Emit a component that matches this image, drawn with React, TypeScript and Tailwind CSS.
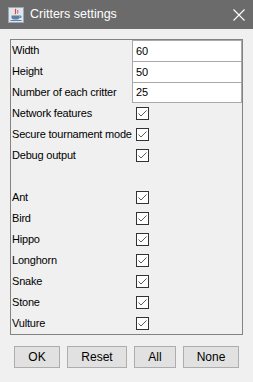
import React from "react";

const fields = [
  { label: "Width", value: "60" },
  { label: "Height", value: "50" },
  { label: "Number of each critter", value: "25" },
];

const options = ["Network features", "Secure tournament mode", "Debug output"];
const critters = ["Ant", "Bird", "Hippo", "Longhorn", "Snake", "Stone", "Vulture"];

function Check() {
  return (
    <div className="ml-[4px] w-[13px] h-[13px] border border-[#333333] bg-white flex items-center justify-center">
      <svg width="11" height="11" viewBox="0 0 11 11">
        <polyline points="1.5,5.5 4,8 9.5,2.5" fill="none" stroke="#5a5a5a" strokeWidth="1" />
      </svg>
    </div>
  );
}

function CheckRow({ label }: { label: string }) {
  return (
    <div className="grid grid-cols-[121px_110px] h-[21px] items-center">
      <span className="pl-[1px] whitespace-nowrap">{label}</span>
      <div className="flex items-center">
        <Check />
      </div>
    </div>
  );
}

export default function App() {
  return (
    <div
      className="w-[253px] h-[382px] bg-[#f0f0f0] flex flex-col text-[11px] tracking-[-0.2px] text-black"
      style={{ fontFamily: '"Liberation Sans", Arial, sans-serif' }}
    >
      {/* title bar */}
      <div className="h-[29px] bg-[#6b6b6b] flex items-center pl-[8px] shrink-0 tracking-normal">
        <svg width="16" height="16" viewBox="0 0 16 16">
          <rect x="0.5" y="0.5" width="15" height="15" fill="#dfe6ee" stroke="#9aa7b4" />
          <path d="M8 2 C6 4 9 5 7 7" stroke="#e2442f" strokeWidth="1.2" fill="none" />
          <path d="M10 3 C9 4.5 10.5 5 9.5 6.5" stroke="#e2442f" strokeWidth="1" fill="none" />
          <path d="M3.5 8.5 H11.5 V10.5 C11.5 12 10 12.5 7.5 12.5 C5 12.5 3.5 12 3.5 10.5 Z" fill="#5b7fa6" />
          <path d="M11.5 9 H13 V10.5 H11.5" stroke="#5b7fa6" fill="none" />
          <rect x="2.5" y="13" width="11" height="1" fill="#5b7fa6" />
        </svg>
        <span className="ml-[6px] text-white text-[12.5px]">Critters settings</span>
        <svg className="ml-auto mr-[8px]" width="12" height="12" viewBox="0 0 12 12">
          <path d="M0.5 0.5 L11.5 11.5 M11.5 0.5 L0.5 11.5" stroke="#ffffff" strokeWidth="1.1" />
        </svg>
      </div>

      {/* settings panel */}
      <div className="pt-[10px] pl-[10px]">
        <div className="w-[233px] border border-[#838383] flex flex-col">
          {fields.map((f, i) => (
            <div key={f.label} className="grid grid-cols-[121px_110px] h-[21px]">
              <span className="pl-[1px] flex items-center whitespace-nowrap">{f.label}</span>
              <div
                className={`bg-white border-x border-t border-[#a9a9a9] flex items-center pl-[3px] ${
                  i === 2 ? "border-b" : ""
                }`}
              >
                {f.value}
              </div>
            </div>
          ))}
          {options.map((o) => (
            <CheckRow key={o} label={o} />
          ))}
          <div className="h-[21px]" />
          {critters.map((c) => (
            <CheckRow key={c} label={c} />
          ))}
        </div>
      </div>

      {/* buttons */}
      <div className="flex justify-center gap-[7px] mt-[11px] text-[12px] tracking-normal">
        <button className="w-[46px] h-[22px] bg-[#e1e1e1] border border-[#adadad]">OK</button>
        <button className="w-[60px] h-[22px] bg-[#e1e1e1] border border-[#adadad]">Reset</button>
        <button className="w-[42px] h-[22px] bg-[#e1e1e1] border border-[#adadad]">All</button>
        <button className="w-[56px] h-[22px] bg-[#e1e1e1] border border-[#adadad]">None</button>
      </div>
    </div>
  );
}
